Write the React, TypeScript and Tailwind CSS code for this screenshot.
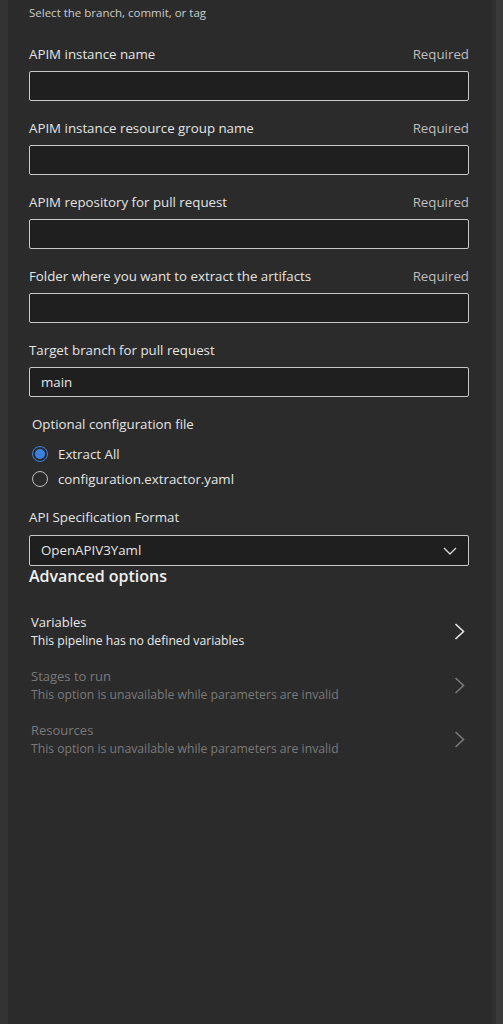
const fields = [
    { label: 'APIM instance name', required: true, value: '' },
    { label: 'APIM instance resource group name', required: true, value: '' },
    { label: 'APIM repository for pull request', required: true, value: '' },
    { label: 'Folder where you want to extract the artifacts', required: true, value: '' },
    { label: 'Target branch for pull request', required: false, value: 'main' },
];

const advanced = [
    { title: 'Variables', desc: 'This pipeline has no defined variables', enabled: true },
    { title: 'Stages to run', desc: 'This option is unavailable while parameters are invalid', enabled: false },
    { title: 'Resources', desc: 'This option is unavailable while parameters are invalid', enabled: false },
];

export default function App() {
    return (
        <div className="flex min-h-[1024px] w-[503px] bg-[#2b2b2b] text-[#e4e4e4] font-['Segoe_UI','Open_Sans',sans-serif]">
            <div className="w-[8px] shrink-0 bg-[#333333]" />
            <div className="flex-1 pl-[21px] pr-[23px]">
                <p className="pt-[5px] text-[11.5px] leading-[16px] text-[#cccccc]">Select the branch, commit, or tag</p>

                {/* Parameter fields */}
                <div className="mt-[23px] space-y-[17px]">
                    {fields.map((f) => (
                        <div key={f.label}>
                            <div className="flex items-center justify-between text-[13.3px] leading-[20px]">
                                <span>{f.label}</span>
                                {f.required && <span className="text-[#bdbdbd]">Required</span>}
                            </div>
                            <input
                                readOnly
                                value={f.value}
                                className="mt-[7px] block h-[30px] w-full rounded-[2px] border border-[#c8c8c8] bg-[#1f1f1f] px-[11px] text-[13.3px] text-[#e6e6e6] outline-none"
                            />
                        </div>
                    ))}
                </div>

                {/* Optional config */}
                <div className="mt-[17px] pl-[3px]">
                    <p className="text-[13.3px] leading-[20px]">Optional configuration file</p>
                    <div className="mt-[10px] flex items-center gap-[10px] text-[13.3px] leading-[20px]">
                        <span className="flex h-[16px] w-[16px] items-center justify-center rounded-full border-[1.5px] border-[#3b82e0]">
                            <span className="h-[10px] w-[10px] rounded-full bg-[#3b82e0]" />
                        </span>
                        <span>Extract All</span>
                    </div>
                    <div className="mt-[5px] flex items-center gap-[10px] text-[13.3px] leading-[20px]">
                        <span className="h-[16px] w-[16px] rounded-full border border-[#bdbdbd]" />
                        <span>configuration.extractor.yaml</span>
                    </div>
                </div>

                {/* API spec format */}
                <div className="mt-[18px]">
                    <p className="text-[13.3px] leading-[20px]">API Specification Format</p>
                    <div className="mt-[8px] flex h-[31px] items-center justify-between rounded-[2px] border border-[#c8c8c8] bg-[#1f1f1f] pl-[11px] pr-[10px] text-[13.3px]">
                        <span>OpenAPIV3Yaml</span>
                        <svg width="14" height="8" viewBox="0 0 14 8" fill="none" className="mr-[1px]">
                            <polyline points="1,1 7,7 13,1" stroke="#d6d6d6" strokeWidth="1.4" />
                        </svg>
                    </div>
                </div>

                <h2 className="-mt-[1px] text-[16px] font-semibold leading-[22px] text-[#f0f0f0]">Advanced options</h2>

                {/* Advanced options */}
                <div className="mt-[26px] space-y-[17px] pl-[2px]">
                    {advanced.map((a) => (
                        <div key={a.title} className={`flex items-center justify-between ${a.enabled ? 'text-[#e8e8e8]' : 'text-[#7a7a7a]'}`}>
                            <div>
                                <p className="text-[13px] leading-[18px]">{a.title}</p>
                                <p className="text-[12.2px] leading-[19px]">{a.desc}</p>
                            </div>
                            <svg width="11" height="17" viewBox="0 0 11 17" fill="none" className="mr-[4px]">
                                <polyline points="1.5,1 9.5,8.5 1.5,16" stroke="currentColor" strokeWidth="1.6" />
                            </svg>
                        </div>
                    ))}
                </div>
            </div>
            <div className="w-[4px] shrink-0 bg-[#303030]" />
            <div className="w-[7px] shrink-0 bg-[#3a3a3a]" />
        </div>
    );
}
